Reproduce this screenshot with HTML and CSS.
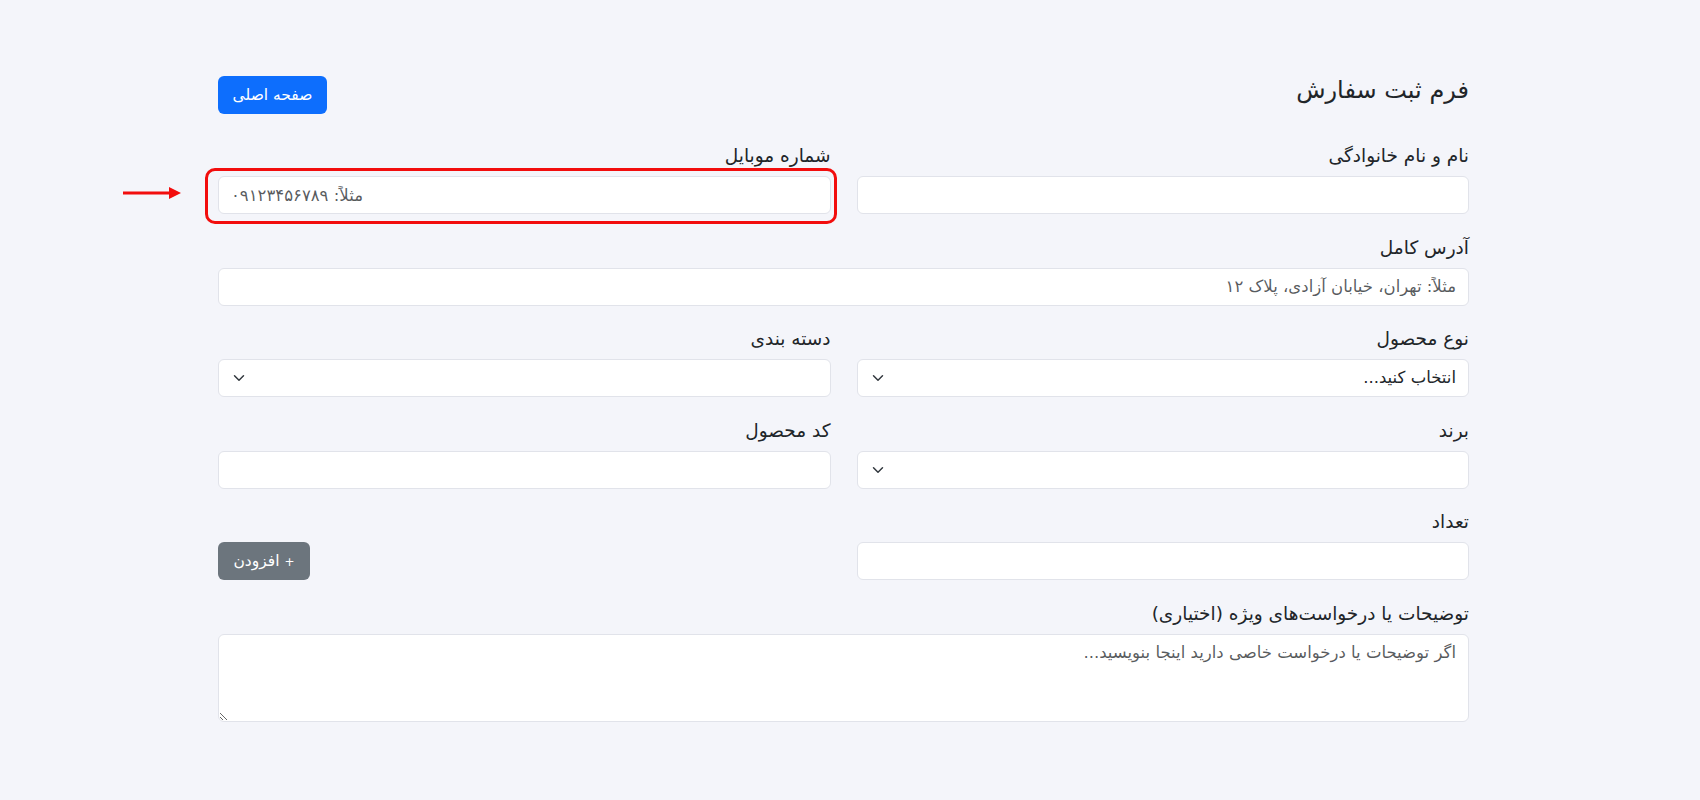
FILE: index.html
```html
<!DOCTYPE html>
<html lang="fa" dir="rtl">
<head>
<meta charset="utf-8">
<title>فرم ثبت سفارش</title>
<link rel="stylesheet" href="styles.css">
</head>
<body>
<div class="page">
  <div class="container">
    <div class="header">
      <h4 class="title">فرم ثبت سفارش</h4>
      <a class="btn btn-primary" href="#">صفحه اصلی</a>
    </div>
    <form class="form-grid">
      <div class="field">
        <label class="form-label">نام و نام خانوادگی</label>
        <input class="form-control" type="text">
      </div>
      <div class="field">
        <label class="form-label">شماره موبایل</label>
        <div class="highlight">
          <input class="form-control ltr" type="text" placeholder="مثلاً: ۰۹۱۲۳۴۵۶۷۸۹">
          <svg class="arrow" width="60" height="14" viewBox="0 0 60 14"><line x1="0" y1="7" x2="48" y2="7" stroke="#f20d0d" stroke-width="3"/><polygon points="46,1 58,7 46,13" fill="#f20d0d"/></svg>
        </div>
      </div>
      <div class="field span-2">
        <label class="form-label">آدرس کامل</label>
        <input class="form-control" type="text" placeholder="مثلاً: تهران، خیابان آزادی، پلاک ۱۲">
      </div>
      <div class="field">
        <label class="form-label">نوع محصول</label>
        <select class="form-select"><option>انتخاب کنید...</option></select>
      </div>
      <div class="field">
        <label class="form-label">دسته بندی</label>
        <select class="form-select"><option></option></select>
      </div>
      <div class="field">
        <label class="form-label">برند</label>
        <select class="form-select"><option></option></select>
      </div>
      <div class="field">
        <label class="form-label">کد محصول</label>
        <input class="form-control" type="text">
      </div>
      <div class="field">
        <label class="form-label">تعداد</label>
        <input class="form-control" type="text">
      </div>
      <div class="field field-end">
        <button type="button" class="btn btn-secondary"><span class="plus">+</span> افزودن</button>
      </div>
      <div class="field span-2">
        <label class="form-label">توضیحات یا درخواست‌های ویژه (اختیاری)</label>
        <textarea class="form-control textarea" rows="3" placeholder="اگر توضیحات یا درخواست خاصی دارید اینجا بنویسید..."></textarea>
      </div>
    </form>
  </div>
</div>
</body>
</html>
```

FILE: styles.css
```css
* { box-sizing: border-box; }
html, body {
  margin: 0;
  background: #f4f5fa;
  font-family: "DejaVu Sans", "Noto Sans", sans-serif;
  color: #212529;
  font-size: 16px;
  line-height: 1.5;
}
.page {
  padding-top: 76px;
  padding-bottom: 40px;
}
.container {
  width: 1251px;
  margin-right: 231px;
  margin-left: auto;
}
.header {
  display: flex;
  justify-content: space-between;
  align-items: flex-start;
  margin-bottom: 30px;
}
.title {
  margin: 0;
  font-size: 24px;
  font-weight: 400;
  line-height: 1.2;
}
.btn {
  display: inline-block;
  height: 38px;
  padding: 0 12px;
  font-family: inherit;
  font-size: 15.5px;
  line-height: 38px;
  border: 0;
  border-radius: 6px;
  color: #fff;
  text-decoration: none;
  cursor: pointer;
}
.btn-primary { background: #0d6efd; width: 109px; text-align: center; }
.btn-secondary { background: #6c757d; width: 92px; text-align: center; }
.plus { font-size: 12px; }
.form-grid {
  display: grid;
  grid-template-columns: 1fr 1fr;
  column-gap: 26px;
  row-gap: 21.5px;
}
.field { display: flex; flex-direction: column; }
.span-2 { grid-column: span 2; }
.field-end { justify-content: flex-end; align-items: flex-end; }
.form-label {
  display: block;
  font-size: 18.5px;
  line-height: 24px;
  margin-bottom: 8px;
}
.form-control, .form-select {
  display: block;
  width: 100%;
  height: 38px;
  padding: 6px 12px;
  font-family: inherit;
  font-size: 16.5px;
  line-height: 24px;
  color: #212529;
  background: #fff;
  border: 1px solid #e1e3ea;
  border-radius: 6px;
  outline: none;
}
.form-control::placeholder { color: rgba(33,37,41,0.75); }
.ltr { text-align: left; }
.form-select {
  appearance: none;
  -webkit-appearance: none;
  padding-left: 36px;
  background-image: url("data:image/svg+xml,%3csvg xmlns='http://www.w3.org/2000/svg' viewBox='0 0 16 16'%3e%3cpath fill='none' stroke='%23343a40' stroke-linecap='round' stroke-linejoin='round' stroke-width='2' d='m2 5 6 6 6-6'/%3e%3c/svg%3e");
  background-repeat: no-repeat;
  background-position: left 12px center;
  background-size: 16px 12px;
}
.textarea {
  height: 88px;
  resize: vertical;
}
.highlight {
  position: relative;
}
.highlight::after {
  content: "";
  position: absolute;
  top: -8px;
  bottom: -10px;
  left: -13px;
  right: -6px;
  border: 3.5px solid #f20d0d;
  border-radius: 10px;
  pointer-events: none;
}
.arrow {
  position: absolute;
  left: -95px;
  top: 10px;
}
```
